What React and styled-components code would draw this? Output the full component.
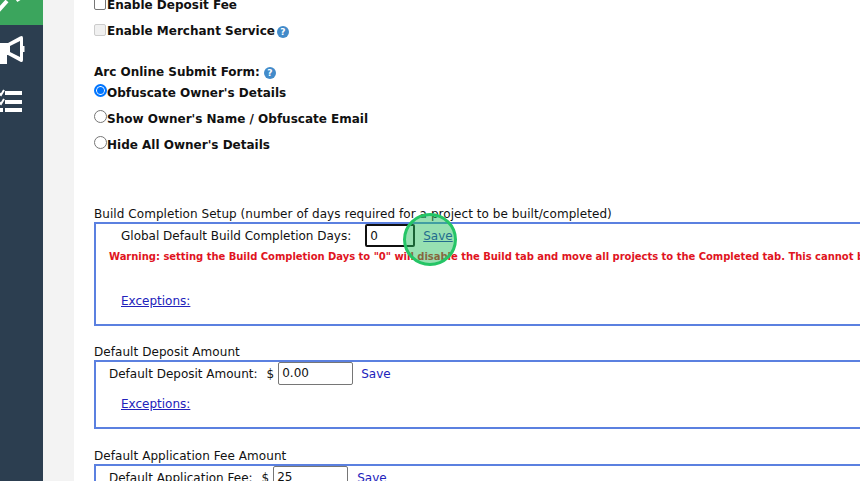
import React from 'react'
import styled, { createGlobalStyle } from 'styled-components'

const GlobalStyle = createGlobalStyle`
	html, body {
		margin: 0;
		padding: 0;
		height: 100%;
		overflow: hidden;
		background: #fff;
	}
	body {
		font-family: "DejaVu Sans", Verdana, sans-serif;
		font-size: 12px;
		color: #111;
	}
`

const Page = styled.div`
	display: flex;
	position: relative;
	width: 860px;
	height: 481px;
	overflow: hidden;
`

const Sidebar = styled.div`
	width: 43px;
	flex: none;
	background: #2c3e50;
	color: #fff;
	display: flex;
	flex-direction: column;
	align-items: flex-start;
`

const ActiveItem = styled.div`
	height: 25px;
	background: #3ba55d;
	overflow: hidden;
`

const SideIcon = styled.svg`
	display: block;
	margin-top: ${props => props.top}px;
`

const Gutter = styled.div`
	width: 31px;
	flex: none;
	background: #f3f3f3;
`

const Content = styled.div`
	flex: 1;
	min-width: 0;
	padding: 0 0 0 20px;
	margin-top: -2px;
`

const CheckRow = styled.label`
	display: flex;
	align-items: flex-start;
	height: 26px;
	font-weight: bold;
	font-size: 12px;
	line-height: 15px;
	white-space: nowrap;
`

const Check = styled.span`
	width: 12px;
	height: 12px;
	flex: none;
	box-sizing: border-box;
	margin-right: 1px;
	border: 1px solid ${props => props.disabled ? '#ccc' : '#767676'};
	background: ${props => props.disabled ? '#f0f0f0' : '#fff'};
	border-radius: 2px;
`

const Radio = styled.span`
	width: 13px;
	height: 13px;
	flex: none;
	box-sizing: border-box;
	margin-top: -2px;
	border-radius: 50%;
	border: ${props => props.checked ? '2px solid #0075ff' : '1px solid #767676'};
	background: ${props => props.checked ? '#0075ff' : '#fff'};
	box-shadow: ${props => props.checked ? 'inset 0 0 0 1px #fff' : 'none'};
`

const Help = styled.span`
	display: inline-flex;
	align-items: center;
	justify-content: center;
	width: 12px;
	height: 12px;
	border-radius: 50%;
	background: #428bca;
	color: #fff;
	font-size: 9px;
	font-weight: bold;
	margin-left: ${props => props.left}px;
	margin-top: 2px;
`

const FormLabel = styled.div`
	display: flex;
	align-items: flex-start;
	margin-top: 15px;
	height: 21px;
	line-height: 15px;
	font-weight: bold;
	white-space: nowrap;
`

const SectionTitle = styled.div`
	margin-top: ${props => props.gap}px;
	height: 15px;
	line-height: 15px;
	letter-spacing: 0.06px;
	white-space: nowrap;
`

const Box = styled.div`
	border: 2px solid #5b80e0;
	border-right: none;
	height: ${props => props.height}px;
	box-sizing: content-box;
`

const FieldRow = styled.div`
	display: flex;
	align-items: center;
	height: 23px;
	padding-left: ${props => props.indent}px;
	white-space: nowrap;
`

const Currency = styled.span`
	margin-left: 9px;
`

const Input = styled.div`
	width: ${props => props.width}px;
	height: 23px;
	box-sizing: border-box;
	margin-left: ${props => props.left}px;
	padding-left: 3px;
	line-height: 20px;
	border: ${props => props.focused ? '2px solid #101010' : '1px solid #767676'};
	border-radius: 2px;
	background: #fff;
`

const Save = styled.a`
	margin-left: ${props => props.left}px;
	color: #2222bb;
	text-decoration: ${props => props.underline ? 'underline' : 'none'};
`

const Warning = styled.div`
	padding-left: 13px;
	margin-top: 3px;
	color: #e0141e;
	font-size: 10px;
	font-weight: bold;
	line-height: 14px;
	letter-spacing: -0.03px;
	white-space: nowrap;
`

const Exceptions = styled.a`
	display: block;
	padding-left: 25px;
	margin-top: ${props => props.top}px;
	color: #2222bb;
	text-decoration: underline;
	line-height: 15px;
`

const Highlight = styled.div`
	position: absolute;
	left: 403px;
	top: 213px;
	width: 54px;
	height: 53px;
	box-sizing: border-box;
	border-radius: 50%;
	border: 3px solid #25c566;
	background: rgba(37, 190, 95, 0.48);
`

export default function App() {
	return (
		<Page>
			<GlobalStyle />
			<Sidebar>
				<ActiveItem>
					<SideIcon width="43" height="25" viewBox="0 0 43 25">
						<path d="M-2 11 L7 1 M17 -2 L19 1" fill="none" stroke="#fff" strokeWidth="4" />
					</SideIcon>
				</ActiveItem>
				<SideIcon top={10} width="26" height="30" viewBox="0 0 26 30">
					<path d="M0 8 H8 L20 1.5 Q23 0 23 3 V11 H24.5 V17 H23 V25 Q23 28 20 26.5 L8 20 H7 V29 H0 Z M20 6 L10 11 V17 L20 22 Z" fill="#fff" fillRule="evenodd" />
				</SideIcon>
				<SideIcon top={23} width="24" height="26" viewBox="0 0 24 26">
					<path d="M-1 5 L1 7 L4 2 M-1 14 L1 16 L4 11" fill="none" stroke="#fff" strokeWidth="2" />
					<path d="M5 3 H22 V7 H5 Z M5 12 H22 V16 H5 Z M5 20 H22 V24 H5 Z M0 20 H3 V24 H0 Z" fill="#fff" />
				</SideIcon>
			</Sidebar>
			<Gutter />
			<Content>
				<CheckRow><Check />Enable Deposit Fee</CheckRow>
				<CheckRow><Check disabled />Enable Merchant Service<Help left={2}>?</Help></CheckRow>
				<FormLabel>Arc Online Submit Form:<Help left={4}>?</Help></FormLabel>
				<CheckRow><Radio checked />Obfuscate Owner's Details</CheckRow>
				<CheckRow><Radio />Show Owner's Name / Obfuscate Email</CheckRow>
				<CheckRow><Radio />Hide All Owner's Details</CheckRow>

				<SectionTitle gap={43}>Build Completion Setup (number of days required for a project to be built/completed)</SectionTitle>
				<Box height={100}>
					<FieldRow indent={25}>
						Global Default Build Completion Days:
						<Input focused width={50} left={14}>0</Input>
						<Save left={8} underline>Save</Save>
					</FieldRow>
					<Warning>Warning: setting the Build Completion Days to "0" will disable the Build tab and move all projects to the Completed tab. This cannot be undone.</Warning>
					<Exceptions top={30}>Exceptions:</Exceptions>
				</Box>

				<SectionTitle gap={19}>Default Deposit Amount</SectionTitle>
				<Box height={65}>
					<FieldRow indent={13}>
						Default Deposit Amount:
						<Currency>$</Currency>
						<Input width={75} left={4}>0.00</Input>
						<Save left={8}>Save</Save>
					</FieldRow>
					<Exceptions top={12}>Exceptions:</Exceptions>
				</Box>

				<SectionTitle gap={20}>Default Application Fee Amount</SectionTitle>
				<Box height={64}>
					<FieldRow indent={13}>
						Default Application Fee:
						<Currency>$</Currency>
						<Input width={75} left={4}>25</Input>
						<Save left={9}>Save</Save>
					</FieldRow>
				</Box>
			</Content>
			<Highlight />
		</Page>
	)
}
